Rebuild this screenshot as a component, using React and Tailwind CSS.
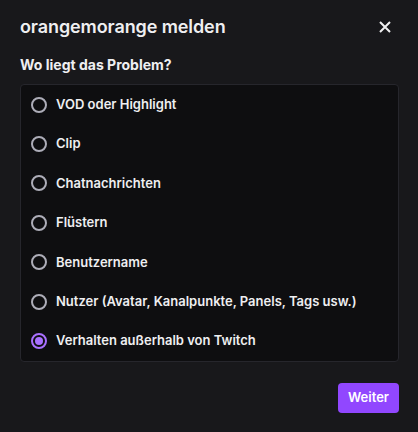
import React from 'react'

const options = [
  'VOD oder Highlight',
  'Clip',
  'Chatnachrichten',
  'Flüstern',
  'Benutzername',
  'Nutzer (Avatar, Kanalpunkte, Panels, Tags usw.)',
  'Verhalten außerhalb von Twitch',
]

function Radio({ checked }) {
  if (checked) {
    return (
      <span className="w-4 h-4 rounded-full border-2 border-[#a970ff] flex items-center justify-center">
        <span className="w-2 h-2 rounded-full bg-[#a970ff]" />
      </span>
    )
  }
  return <span className="w-4 h-4 rounded-full border-2 border-[#adadb8]" />
}

export default function App() {
  return (
    <div className="w-[418px] h-[432px] bg-[#18181b] text-[#efeff1] px-5 flex flex-col" style={{ fontFamily: 'Inter, "Noto Sans", sans-serif' }}>
      <div className="flex items-center justify-between h-[52px] pt-[1px]">
        <h1 className="text-[18px] font-semibold tracking-[-0.1px]">orangemorange melden</h1>
        <button className="w-6 h-6 flex items-center justify-center mr-[1px] text-[#efeff1]">
          <svg width="14" height="14" viewBox="0 0 14 14" fill="none" stroke="currentColor" strokeWidth="2">
            <path d="M2 2L12 12M12 2L2 12" />
          </svg>
        </button>
      </div>
      <p className="text-[14px] font-bold mt-[3px] leading-5">Wo liegt das Problem?</p>
      <div className="mt-[9px] mr-[-1px] bg-[#0e0e10] border border-[#26262c] rounded-[4px] flex flex-col">
        {options.map((o, i) => (
          <label key={o} className="h-[39.4px] flex items-center gap-[9px] pl-[10px]">
            <Radio checked={i === options.length - 1} />
            <span className="text-[13px] font-semibold">{o}</span>
          </label>
        ))}
      </div>
      <div className="flex justify-end mt-[21px] mr-[-1px]">
        <button className="h-[30px] px-[10px] rounded-[4px] bg-[#9147ff] text-white text-[13px] font-semibold">Weiter</button>
      </div>
    </div>
  )
}
